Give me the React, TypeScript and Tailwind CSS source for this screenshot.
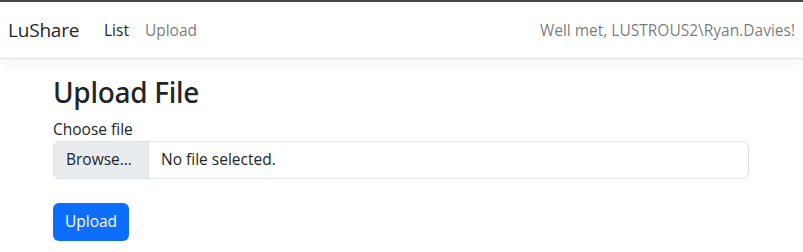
export default function App() {
  const font = { fontFamily: '"Open Sans", "Noto Sans", sans-serif' };
  return (
    <div className="min-h-[252px] bg-white text-[#212529]" style={font}>
      <nav className="border-t-2 border-t-[#454545] border-b border-b-[#dee2e6] bg-white shadow-[0_4px_12px_rgba(0,0,0,0.05)] mb-4">
        <div className="flex items-center h-[56px] px-2">
          <span className="text-[19px] leading-[30px] w-[96px] text-[#212529] tracking-[-0.2px]">LuShare</span>
          <span className="text-[15.5px] leading-6 text-[#212529]">List</span>
          <span className="ml-[16px] text-[15.5px] leading-6 text-[rgba(0,0,0,0.55)]">Upload</span>
          <span className="ml-auto text-[15.5px] leading-6 text-[rgba(0,0,0,0.55)]">Well met, LUSTROUS2\Ryan.Davies!</span>
        </div>
      </nav>
      <main className="ml-[41px] w-[720px] px-3">
        <h2 className="text-[28px] leading-[34px] font-medium mb-2 font-['Noto_Sans',sans-serif] tracking-[-0.3px]">Upload File</h2>
        <div className="text-[15.5px] leading-6">Choose file</div>
        <div className="flex h-[38px] border border-[#dee2e6] rounded-md overflow-hidden text-[15.5px]">
          <div className="flex items-center w-[95px] pl-3 bg-[#e9ecef] border-r border-[#dee2e6]">Browse…</div>
          <div className="flex items-center px-3 bg-white">No file selected.</div>
        </div>
        <button className="mt-6 h-[38px] w-[76px] rounded-md bg-[#0d6efd] text-white text-[15.5px]">Upload</button>
      </main>
    </div>
  );
}
